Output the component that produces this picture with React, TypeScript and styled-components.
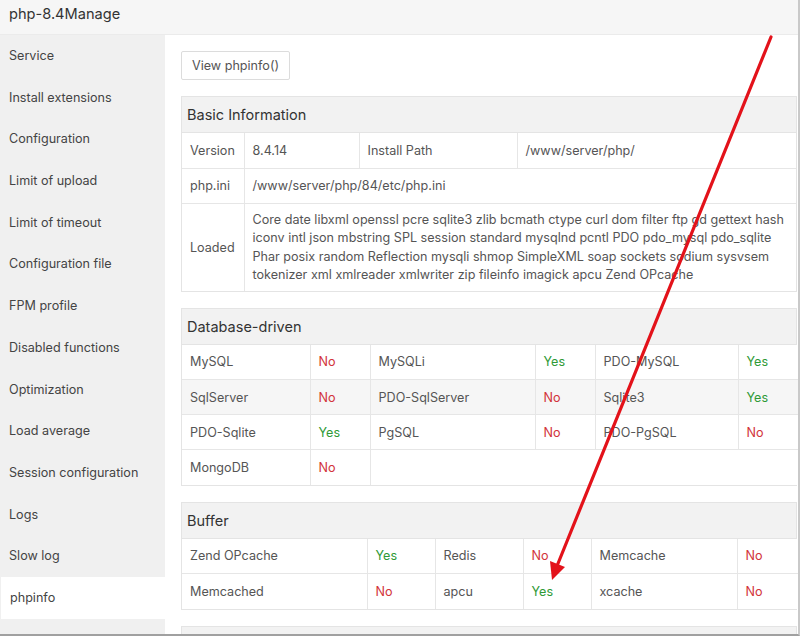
import React from 'react';
import styled, { createGlobalStyle } from 'styled-components';

const GlobalStyle = createGlobalStyle`
  * { box-sizing: border-box; }
  body {
    margin: 0;
    font-family: Inter, "Noto Sans", "Liberation Sans", sans-serif;
    background: #fff;
  }
`;

const menu = [
  'Service',
  'Install extensions',
  'Configuration',
  'Limit of upload',
  'Limit of timeout',
  'Configuration file',
  'FPM profile',
  'Disabled functions',
  'Optimization',
  'Load average',
  'Session configuration',
  'Logs',
  'Slow log',
  'phpinfo',
];

type Cell = { text?: string; status?: 'yes' | 'no'; span?: number };

const dbRows: Cell[][] = [
  [{ text: 'MySQL' }, { text: 'No', status: 'no' }, { text: 'MySQLi' }, { text: 'Yes', status: 'yes' }, { text: 'PDO-MySQL' }, { text: 'Yes', status: 'yes' }],
  [{ text: 'SqlServer' }, { text: 'No', status: 'no' }, { text: 'PDO-SqlServer' }, { text: 'No', status: 'no' }, { text: 'Sqlite3' }, { text: 'Yes', status: 'yes' }],
  [{ text: 'PDO-Sqlite' }, { text: 'Yes', status: 'yes' }, { text: 'PgSQL' }, { text: 'No', status: 'no' }, { text: 'PDO-PgSQL' }, { text: 'No', status: 'no' }],
  [{ text: 'MongoDB' }, { text: 'No', status: 'no' }, { span: 4 }],
];

const bufferRows: Cell[][] = [
  [{ text: 'Zend OPcache' }, { text: 'Yes', status: 'yes' }, { text: 'Redis' }, { text: 'No', status: 'no' }, { text: 'Memcache' }, { text: 'No', status: 'no' }],
  [{ text: 'Memcached' }, { text: 'No', status: 'no' }, { text: 'apcu' }, { text: 'Yes', status: 'yes' }, { text: 'xcache' }, { text: 'No', status: 'no' }],
];

const loaded = [
  'Core date libxml openssl pcre sqlite3 zlib bcmath ctype curl dom filter ftp gd gettext hash',
  'iconv intl json mbstring SPL session standard mysqlnd pcntl PDO pdo_mysql pdo_sqlite',
  'Phar posix random Reflection mysqli shmop SimpleXML soap sockets sodium sysvsem',
  'tokenizer xml xmlreader xmlwriter zip fileinfo imagick apcu Zend OPcache',
];

export default function App() {
  return (
    <Frame>
      <GlobalStyle />
      <Header>php-8.4Manage</Header>
      <Body>
        <Sidebar>
          {menu.map((item) => (
            <MenuItem key={item} $active={item === 'phpinfo'}>
              {item}
            </MenuItem>
          ))}
        </Sidebar>
        <Content>
          <Button>View phpinfo()</Button>

          <Section>
            <SectionTitle>Basic Information</SectionTitle>
            <Table>
              <colgroup>
                <col style={{ width: 62 }} />
                <col style={{ width: 115 }} />
                <col style={{ width: 158 }} />
                <col />
              </colgroup>
              <tbody>
                <Row>
                  <Td>Version</Td>
                  <Td>8.4.14</Td>
                  <Td>Install Path</Td>
                  <Td>/www/server/php/</Td>
                </Row>
                <Row>
                  <Td>php.ini</Td>
                  <Td colSpan={3}>/www/server/php/84/etc/php.ini</Td>
                </Row>
                <tr>
                  <Td>Loaded</Td>
                  <LoadedCell colSpan={3}>
                    {loaded.map((line) => (
                      <div key={line}>{line}</div>
                    ))}
                  </LoadedCell>
                </tr>
              </tbody>
            </Table>
          </Section>

          <Section>
            <SectionTitle>Database-driven</SectionTitle>
            <StatusTable widths={[128, 60, 165, 60, 143, 60]} rows={dbRows} shaded={1} />
          </Section>

          <Section>
            <SectionTitle>Buffer</SectionTitle>
            <StatusTable widths={[185, 68, 88, 68, 146, 61]} rows={bufferRows} />
          </Section>

          <Section>
            <SectionTitle />
          </Section>
        </Content>
      </Body>

      <Arrow viewBox="0 0 800 636" width="800" height="636">
        <line x1="771" y1="37" x2="557" y2="566" stroke="#e3121a" strokeWidth="3.2" strokeLinecap="round" />
        <polygon points="552,580 565,567 550,561" fill="#e3121a" />
      </Arrow>
    </Frame>
  );
}

function StatusTable({ widths, rows, shaded }: { widths: number[]; rows: Cell[][]; shaded?: number }) {
  return (
    <Table>
      <colgroup>
        {widths.map((w, i) => (
          <col key={i} style={{ width: w }} />
        ))}
      </colgroup>
      <tbody>
        {rows.map((row, r) => (
          <Row key={r} $shaded={r === shaded}>
            {row.map((cell, c) => (
              <Td key={c} colSpan={cell.span} $status={cell.status}>
                {cell.text}
              </Td>
            ))}
          </Row>
        ))}
      </tbody>
    </Table>
  );
}

const Frame = styled.div`
  position: relative;
  width: 800px;
  height: 636px;
  overflow: hidden;
  border-right: 2px solid #c9c9c9;
  border-bottom: 2px solid #a0a0a0;
`;

const Header = styled.div`
  height: 35px;
  line-height: 28px;
  padding-left: 9px;
  font-size: 14.6px;
  color: #333;
  background: #f6f6f6;
  border-bottom: 1px solid #ebebeb;
`;

const Body = styled.div`
  display: flex;
  height: 599px;
`;

const Sidebar = styled.div`
  width: 165px;
  flex-shrink: 0;
  background: #f0f0f0;
`;

const MenuItem = styled.div<{ $active?: boolean }>`
  height: 41.7px;
  line-height: 41.7px;
  padding-left: 9px;
  font-size: 12.6px;
  color: #444;
  margin-left: ${(p) => (p.$active ? '1px' : '0')};
  background: ${(p) => (p.$active ? '#fff' : 'transparent')};
`;

const Content = styled.div`
  flex: 1;
  min-width: 0;
  padding: 16px 1px 0 16px;
`;

const Button = styled.button`
  display: block;
  height: 29px;
  padding: 0 10px;
  font-family: inherit;
  font-size: 12.6px;
  color: #555;
  background: #fff;
  border: 1px solid #dcdcdc;
  border-radius: 2px;
`;

const Section = styled.div`
  margin-top: 16px;
  border: 1px solid #e4e4e4;
`;

const SectionTitle = styled.div`
  height: 36px;
  line-height: 35px;
  padding-left: 5px;
  font-size: 14.5px;
  color: #333;
  background: #f2f2f2;
  border-bottom: 1px solid #e4e4e4;
`;

const Table = styled.table`
  width: 100%;
  table-layout: fixed;
  border-collapse: collapse;
  border-style: hidden;
`;

const Row = styled.tr<{ $shaded?: boolean }>`
  height: 35px;
  background: ${(p) => (p.$shaded ? '#f6f6f6' : '#fff')};
`;

const Td = styled.td<{ $status?: 'yes' | 'no' }>`
  border: 1px solid #e6e6e6;
  padding: 0 8px;
  font-size: 12.6px;
  white-space: nowrap;
  color: ${(p) => (p.$status === 'yes' ? '#2f9a36' : p.$status === 'no' ? '#d2343a' : '#555')};
`;

const LoadedCell = styled(Td)`
  padding: 7px 8px 6px;
  line-height: 18.5px;
  white-space: normal;
`;

const Arrow = styled.svg`
  position: absolute;
  top: 0;
  left: 0;
  pointer-events: none;
`;
